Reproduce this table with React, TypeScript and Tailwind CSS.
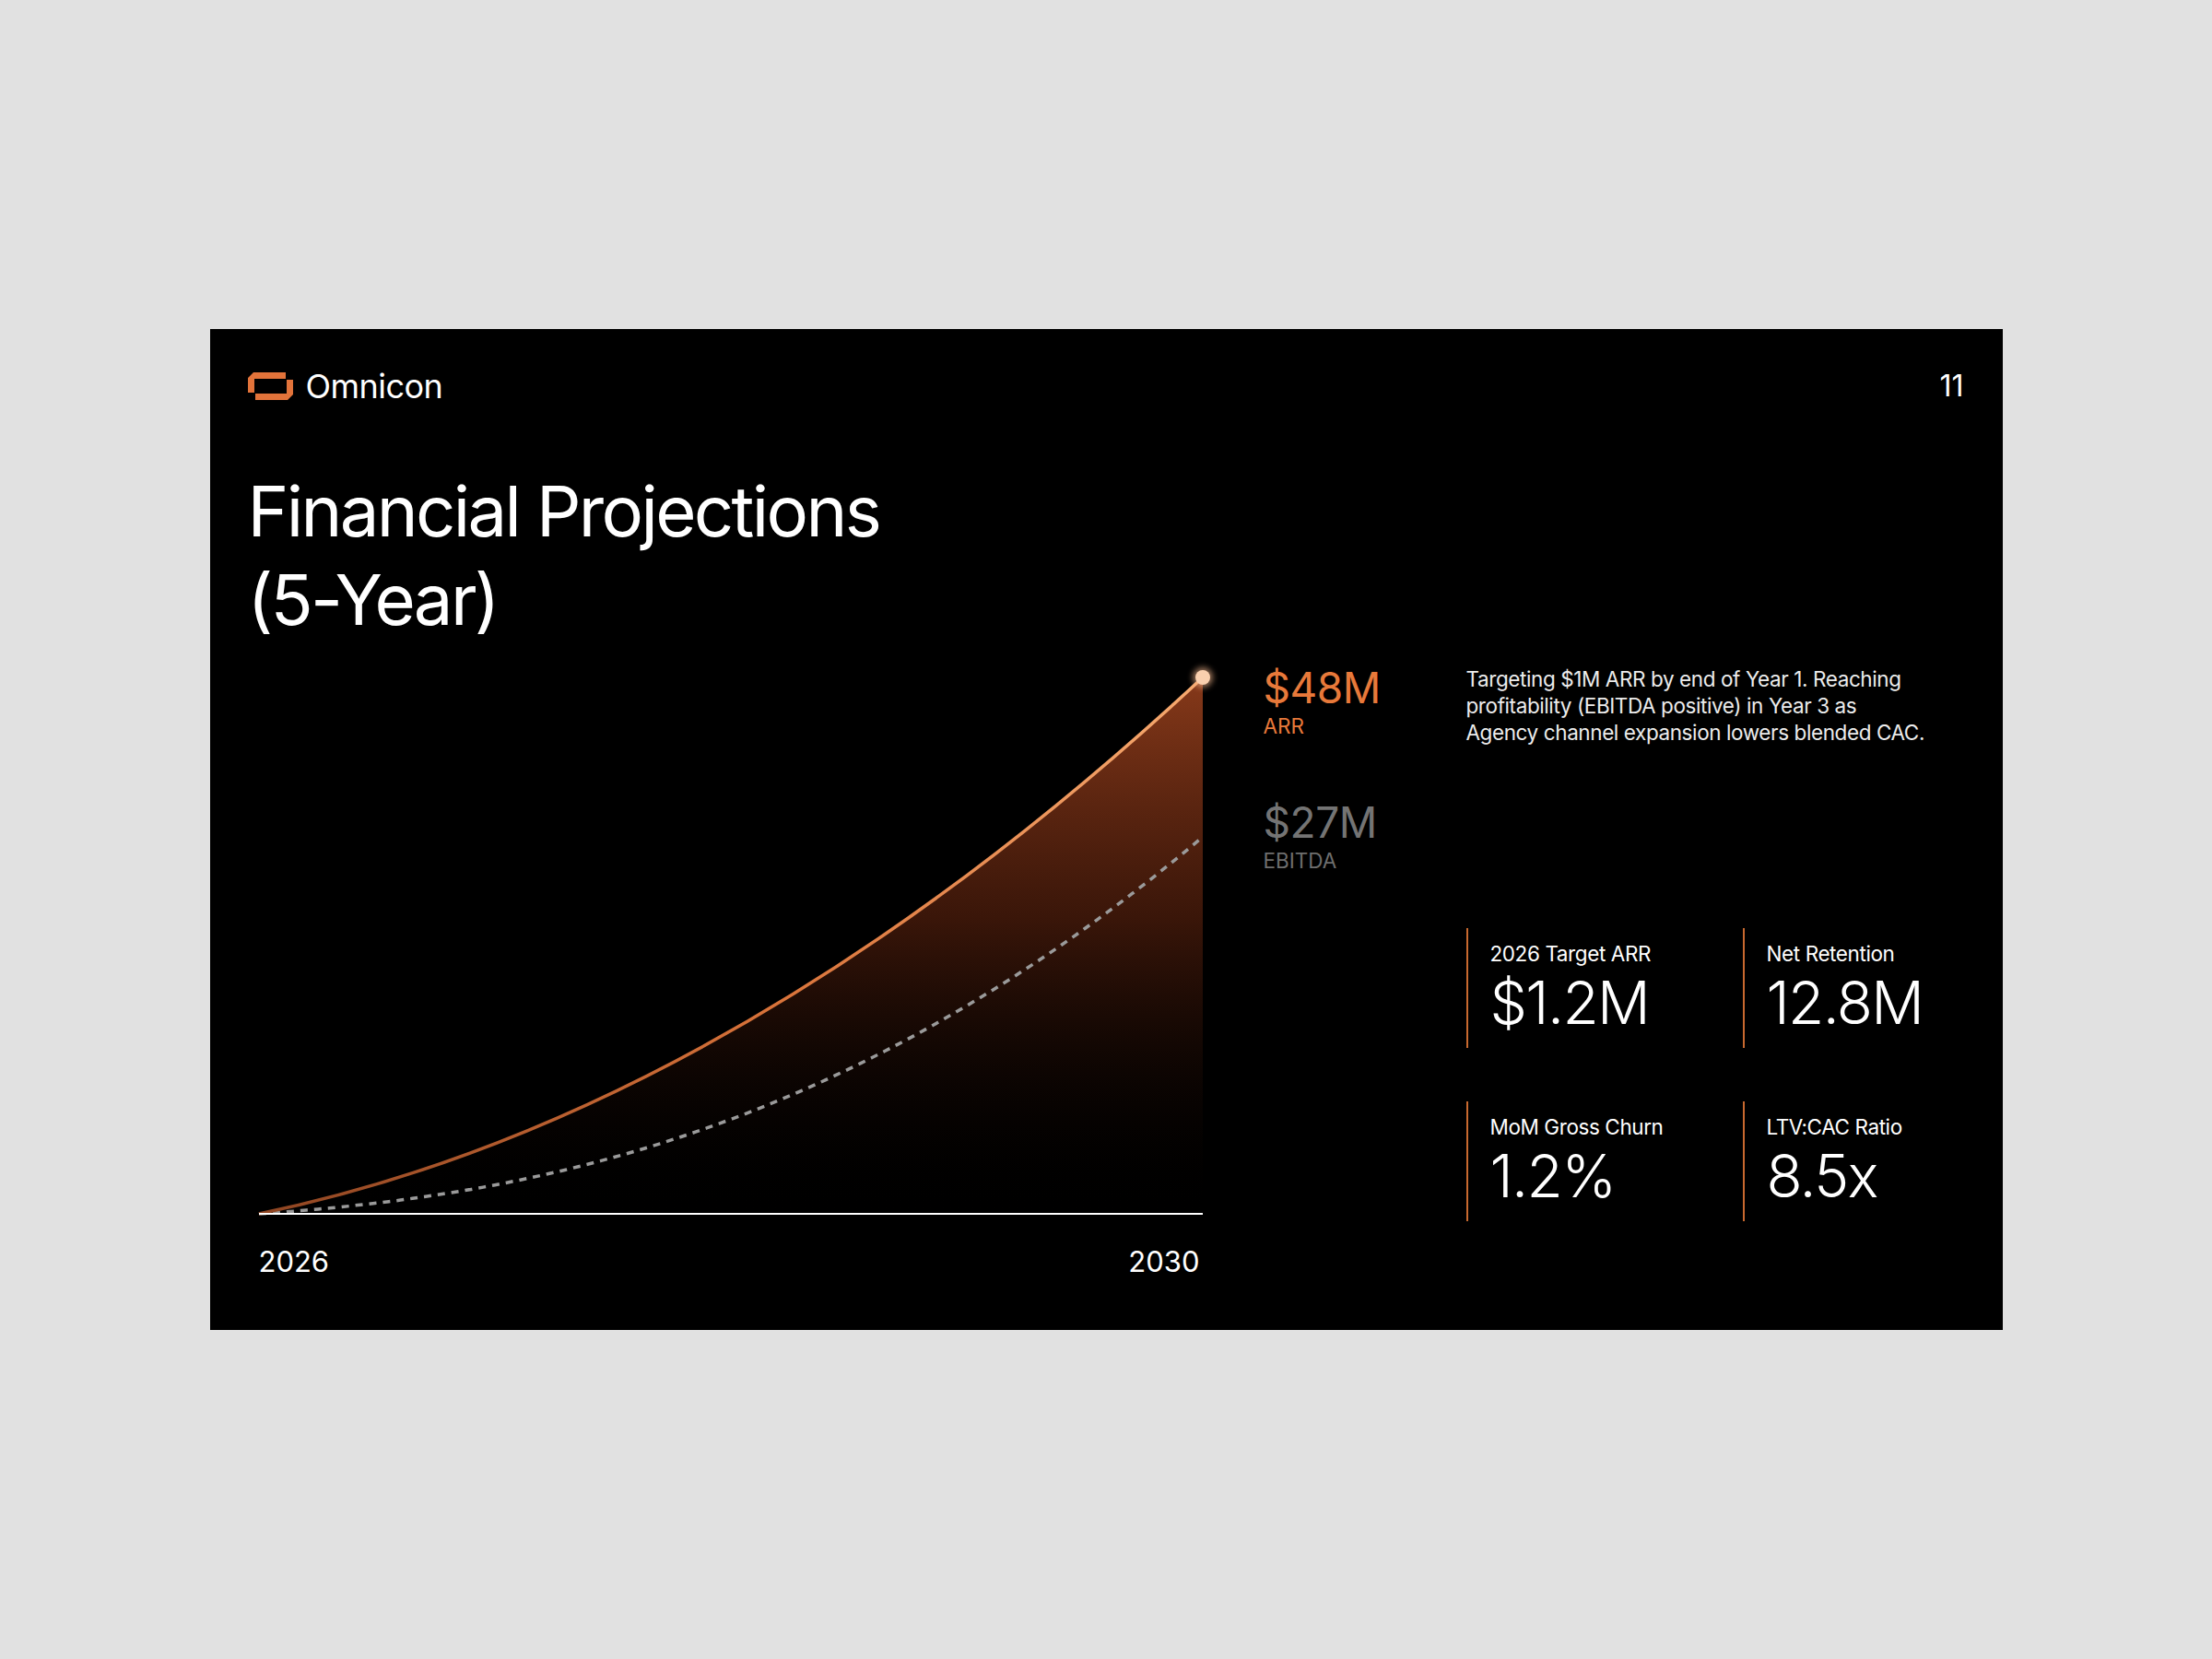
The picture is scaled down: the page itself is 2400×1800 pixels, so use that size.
import React from "react";

const W = 1060;
const H = 606;
const X0 = 12;
const X1 = 1036;
const BASE = 602;

function ebitdaPoints() {
  const pts: string[] = [];
  for (let i = 0; i <= 80; i++) {
    const t = i / 80;
    const x = X0 + (X1 - X0) * t;
    const y = BASE - 409 * (0.18 * t + 0.82 * Math.pow(t, 2.35));
    pts.push(`${x.toFixed(1)},${y.toFixed(1)}`);
  }
  return pts.join(" ");
}

function Logo() {
  return (
    <svg width="49" height="30" viewBox="0 0 49 30" className="shrink-0">
      <path d="M0 6 L6 0 L41 0 L41 7 L7 7 L7 22 L0 22 Z" fill="#e2733a" />
      <path d="M49 24 L43 30 L8 30 L8 23 L42 23 L42 8 L49 8 Z" fill="#e2733a" />
    </svg>
  );
}

function Chart() {
  return (
    <svg width={W} height={H} viewBox={`0 0 ${W} ${H}`} className="block overflow-visible">
      <defs>
        <linearGradient id="arrStroke" x1={X0} y1="0" x2={X1} y2="0" gradientUnits="userSpaceOnUse">
          <stop offset="0" stopColor="#8f4522" />
          <stop offset="0.55" stopColor="#d9733a" />
          <stop offset="1" stopColor="#f7aa70" />
        </linearGradient>
        <linearGradient id="arrFill" x1="0" y1="20" x2="0" y2={BASE} gradientUnits="userSpaceOnUse">
          <stop offset="0" stopColor="#8e3c1b" stopOpacity="0.95" />
          <stop offset="0.45" stopColor="#4d1d0c" stopOpacity="0.75" />
          <stop offset="1" stopColor="#000000" stopOpacity="0" />
        </linearGradient>
        <filter id="glow" x="-2" y="-2" width="5" height="5">
          <feGaussianBlur stdDeviation="3" />
        </filter>
      </defs>
      <path d={`M${X0},${BASE} Q524,496 ${X1},20 L${X1},${BASE} Z`} fill="url(#arrFill)" />
      <polyline
        points={ebitdaPoints()}
        fill="none"
        stroke="#9a9a9a"
        strokeWidth="3.5"
        strokeDasharray="8 7"
      />
      <path d={`M${X0},${BASE} Q524,496 ${X1},20`} fill="none" stroke="url(#arrStroke)" strokeWidth="3.5" />
      <line x1={X0} y1={BASE} x2={X1} y2={BASE} stroke="#ffffff" strokeWidth="2" />
      <circle cx={X1} cy="20" r="11" fill="#f6b88e" opacity="0.6" filter="url(#glow)" />
      <circle cx={X1} cy="20" r="8" fill="#f9cfae" />
    </svg>
  );
}

const metrics = [
  { label: "2026 Target ARR", value: "$1.2M" },
  { label: "Net Retention", value: "12.8M" },
  { label: "MoM Gross Churn", value: "1.2%" },
  { label: "LTV:CAC Ratio", value: "8.5x" },
];

export default function App() {
  return (
    <div className="flex h-[1800px] w-[2400px] items-center justify-center bg-[#e1e1e1] font-['Inter',sans-serif]">
      <div className="flex h-[1086px] w-[1945px] flex-col bg-black px-[41px] pt-[41px] text-white">
        {/* header */}
        <div className="flex h-[42px] items-center justify-between">
          <div className="flex items-center gap-[14px]">
            <Logo />
            <span className="text-[36px] leading-[42px] tracking-[-0.015em]">Omnicon</span>
          </div>
          <span className="pr-[1px] text-[32px] leading-[42px]">11</span>
        </div>

        <h1 className="mt-[66px] text-[76px] font-normal leading-[96px] tracking-[-0.035em]">
          Financial Projections
          <br />
          (5-Year)
        </h1>

        <div className="mt-[17px] flex">
          {/* chart column */}
          <div className="flex w-[1102px] flex-col">
            <Chart />
            <div className="ml-[12px] mt-[28px] flex w-[1021px] justify-between text-[31px] leading-[40px]">
              <span>2026</span>
              <span>2030</span>
            </div>
          </div>

          {/* right side */}
          <div className="flex">
            <div className="flex w-[220px] flex-col pt-[3px]">
              <span className="text-[46px] leading-[56px] tracking-[-0.01em] text-[#e8793a]">$48M</span>
              <span className="text-[22.5px] leading-[28px] text-[#e8793a]">ARR</span>
              <span className="mt-[62px] text-[46px] leading-[56px] tracking-[-0.01em] text-[#747474]">$27M</span>
              <span className="text-[22.5px] leading-[28px] text-[#6e6e6e]">EBITDA</span>
            </div>

            <div className="flex flex-col pt-[7px]">
              <p className="whitespace-nowrap text-[22.5px] leading-[29px] tracking-[-0.018em] text-[#ececec]">
                Targeting $1M ARR by end of Year 1. Reaching
                <br />
                profitability (EBITDA positive) in Year 3 as
                <br />
                Agency channel expansion lowers blended CAC.
              </p>

              <div className="mt-[198px] grid grid-cols-[300px_240px] gap-y-[58px]">
                {metrics.map((m) => (
                  <div key={m.label} className="flex h-[130px] flex-col border-l-2 border-[#c8692f] pl-[24px] pt-[14px]">
                    <span className="text-[22.5px] leading-[28px] tracking-[-0.018em]">{m.label}</span>
                    <span className="mt-[7px] text-[64px] font-light leading-[64px] tracking-[-0.025em]">
                      {m.value}
                    </span>
                  </div>
                ))}
              </div>
            </div>
          </div>
        </div>
      </div>
    </div>
  );
}
